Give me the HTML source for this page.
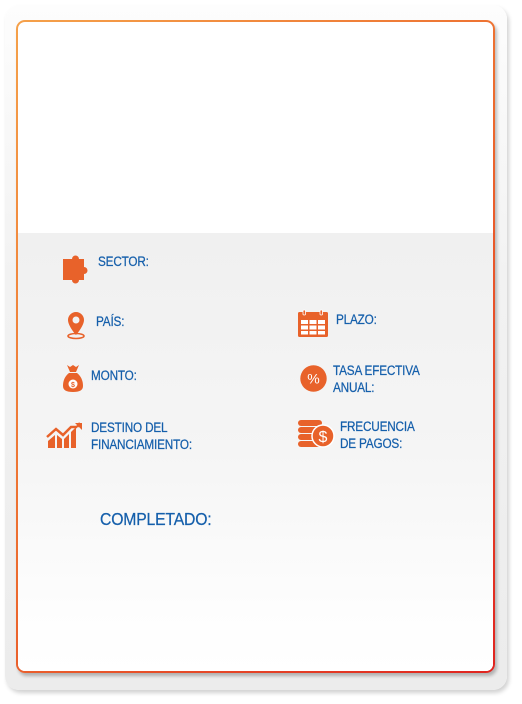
<!DOCTYPE html>
<html><head><meta charset="utf-8"><style>
html,body{margin:0;padding:0;width:522px;height:704px;background:#fff;overflow:hidden}
.outer{position:absolute;left:5px;top:5px;width:502px;height:685px;border-radius:14px;background:linear-gradient(#fdfdfd,#f2f2f2 40%,#ececec);box-shadow:2px 3px 4px rgba(0,0,0,.18)}
.inner{position:absolute;left:16px;top:20px;width:479px;height:653px;border-radius:9px;background:linear-gradient(135deg,#f5a14a,#ec6a2e 50%,#e02420);box-shadow:2px 3px 3px rgba(0,0,0,.25)}
.in2{position:absolute;left:2px;top:2px;right:2px;bottom:2px;border-radius:7px;background:#fff;overflow:hidden}
.gray{position:absolute;left:0;right:0;top:211px;height:440px;background:linear-gradient(#f0f0f0,#f5f5f5 50%,#fdfdfd 85%,#fff)}
.t{position:absolute;font-family:"Liberation Sans",sans-serif;color:#155fab;font-size:13.5px;line-height:17px;letter-spacing:-.2px;transform:scaleX(.87);transform-origin:0 0;white-space:nowrap;-webkit-text-stroke:.25px #155fab}
svg{position:absolute}
</style></head><body>
<div class="outer"></div>
<div class="inner"><div class="in2"><div class="gray"></div></div></div>

<svg style="left:62px;top:251px" width="30" height="35" viewBox="0 0 30 35"><path fill="#e8622a" d="M1 8h9a3.5 3.5 0 1 1 7 0h5v8a3.5 3.5 0 1 1 0 7v6h-5a3.5 3.5 0 1 1-7 0H1z"/></svg>
<div class="t" style="left:98px;top:253px">SECTOR:</div>

<svg style="left:65px;top:311px" width="22" height="29" viewBox="0 0 22 29"><path fill="#e8622a" d="M11 1a8 8 0 0 0-8 8c0 6 8 15 8 15s8-9 8-15a8 8 0 0 0-8-8zm0 4.5a3.5 3.5 0 1 1 0 7 3.5 3.5 0 0 1 0-7z"/><ellipse cx="11" cy="25" rx="8" ry="2.5" fill="none" stroke="#e8622a" stroke-width="1.6"/></svg>
<div class="t" style="left:96px;top:313px">PAÍS:</div>

<svg style="left:297px;top:309px" width="32" height="29" viewBox="0 0 32 29"><rect x="1" y="3" width="30" height="25" rx="1.5" fill="#e8622a"/><rect x="6" y="1" width="2.5" height="5" rx="1" fill="#e8622a" stroke="#fff" stroke-width=".8"/><rect x="23" y="1" width="2.5" height="5" rx="1" fill="#e8622a" stroke="#fff" stroke-width=".8"/><g fill="#fff"><rect x="4" y="11" width="7" height="4"/><rect x="12.5" y="11" width="7" height="4"/><rect x="21" y="11" width="7" height="4"/><rect x="4" y="16.5" width="7" height="4"/><rect x="12.5" y="16.5" width="7" height="4"/><rect x="21" y="16.5" width="7" height="4"/><rect x="4" y="22" width="7" height="3.5"/><rect x="12.5" y="22" width="7" height="3.5"/><rect x="21" y="22" width="7" height="3.5"/></g></svg>
<div class="t" style="left:336px;top:311px">PLAZO:</div>

<svg style="left:62px;top:364px" width="22" height="29" viewBox="0 0 22 29"><path fill="#e8622a" d="M5 1l3 2 3-2 3 2 3-2-3 7h-6zM7 9h8c5 4 6 9 6 13 0 4-3 6-10 6S1 26 1 22c0-4 1-9 6-13z"/><circle cx="11" cy="20" r="4.5" fill="#fff"/><text x="11" y="23" font-size="7" fill="#e8622a" text-anchor="middle" font-family="Liberation Sans" font-weight="bold">$</text></svg>
<div class="t" style="left:91px;top:367px">MONTO:</div>

<svg style="left:300px;top:365px" width="27" height="27" viewBox="0 0 27 27"><circle cx="13.5" cy="13.5" r="13.2" fill="#e8622a"/><text x="13.5" y="18.5" font-size="14" fill="#fff" text-anchor="middle" font-family="Liberation Sans">%</text></svg>
<div class="t" style="left:333px;top:362px">TASA EFECTIVA<br>ANUAL:</div>

<svg style="left:46px;top:422px" width="37" height="27" viewBox="0 0 37 27"><path fill="none" stroke="#e8622a" stroke-width="2.5" d="M1 15l9-8 7 6 8-8 6 0M34 1l-3 4"/><path fill="#e8622a" d="M29 1h7v7z"/><path fill="#e8622a" d="M2 19l7-6v13H2zM11 13l5 4v9h-5zM18 17l5-5v14h-5zM25 10l5-5v21h-5z"/></svg>
<div class="t" style="left:91px;top:419px">DESTINO DEL<br>FINANCIAMIENTO:</div>

<svg style="left:297px;top:419px" width="39" height="30" viewBox="0 0 39 30"><g fill="#e8622a"><rect x="1" y="1" width="24" height="6" rx="3"/><rect x="1" y="8" width="24" height="6" rx="3"/><rect x="1" y="15" width="24" height="6" rx="3"/><rect x="1" y="22" width="24" height="6" rx="3"/></g><circle cx="26" cy="17" r="11" fill="#e8622a" stroke="#fff" stroke-width="1.5"/><text x="26" y="23" font-size="16" fill="#fff" text-anchor="middle" font-family="Liberation Sans">$</text></svg>
<div class="t" style="left:340px;top:418px">FRECUENCIA<br>DE PAGOS:</div>

<div class="t" style="left:100px;top:509px;font-size:17.5px;line-height:20px;transform:scaleX(.9)">COMPLETADO:</div>
</body></html>
